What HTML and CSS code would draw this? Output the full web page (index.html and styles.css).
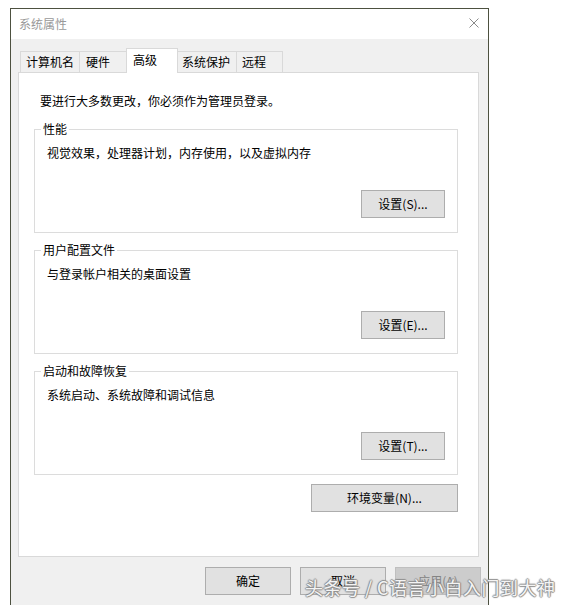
FILE: index.html
```html
<!DOCTYPE html>
<html lang="zh-CN">
<head>
<meta charset="utf-8">
<title>系统属性</title>
<link rel="stylesheet" href="styles.css">
</head>
<body>
<div class="window">
  <div class="titlebar">
    <span class="title">系统属性</span>
    <svg class="close" width="10" height="10" viewBox="0 0 10 10"><path d="M0.5 0.5 L9.5 9.5 M9.5 0.5 L0.5 9.5" stroke="#8a8a8a" stroke-width="1" fill="none"/></svg>
  </div>
  <div class="client">
    <div class="tabs">
      <div class="tab t1">计算机名</div>
      <div class="tab t2">硬件</div>
      <div class="tab selected">高级</div>
      <div class="tab t4">系统保护</div>
      <div class="tab t5">远程</div>
    </div>
    <div class="panel">
      <p class="notice">要进行大多数更改，你必须作为管理员登录。</p>
      <fieldset class="group">
        <legend>性能</legend>
        <div class="group-body">
          <p class="desc">视觉效果，处理器计划，内存使用，以及虚拟内存</p>
          <button class="btn">设置(S)...</button>
        </div>
      </fieldset>
      <fieldset class="group">
        <legend>用户配置文件</legend>
        <div class="group-body">
          <p class="desc">与登录帐户相关的桌面设置</p>
          <button class="btn">设置(E)...</button>
        </div>
      </fieldset>
      <fieldset class="group last">
        <legend>启动和故障恢复</legend>
        <div class="group-body">
          <p class="desc">系统启动、系统故障和调试信息</p>
          <button class="btn">设置(T)...</button>
        </div>
      </fieldset>
      <div class="env-row">
        <button class="btn env">环境变量(N)...</button>
      </div>
    </div>
    <div class="footer">
      <button class="btn foot">确定</button>
      <button class="btn foot">取消</button>
      <button class="btn foot disabled">应用(A)</button>
    </div>
  </div>
</div>
<div class="watermark">头条号 / C语言小白入门到大神</div>
</body>
</html>
```
FILE: styles.css
```css
html, body {
  margin: 0;
  padding: 0;
  overflow: hidden;
  background: #ffffff;
}
body {
  width: 569px;
  height: 605px;
  position: relative;
  font-family: "Noto Sans CJK SC", "Noto Sans", sans-serif;
  font-size: 12px;
  color: #000;
}
.window {
  margin: 8px 0 0 10px;
  width: 479px;
  height: 640px;
  box-sizing: border-box;
  border: 1px solid #4d5140;
  border-bottom: none;
  background: #f0f0f0;
}
.titlebar {
  height: 30px;
  background: #fff;
  display: flex;
  align-items: center;
  justify-content: space-between;
  padding: 0 9px 0 8px;
}
.title {
  color: #999;
  font-size: 12px;
  line-height: 30px;
}
.close {
  display: block;
  margin-top: -2px;
}
.client {
  padding: 9px 9px 0 7px;
}
.tabs {
  display: flex;
  align-items: flex-end;
  padding-left: 2px;
}
.tab {
  box-sizing: border-box;
  height: 21px;
  border: 1px solid #d9d9d9;
  border-bottom: none;
  background: #f0f0f0;
  display: flex;
  align-items: center;
  justify-content: flex-start;
  line-height: 16px;
  padding: 0 0 1px 5px;
  white-space: nowrap;
}
.t1 { width: 60px; }
.t2 { width: 49px; margin-left: -1px; padding-left: 6px; }
.selected {
  width: 52px;
  height: 25px;
  margin-left: -2px;
  margin-bottom: -1px;
  background: #fff;
  position: relative;
  z-index: 1;
  padding: 0 0 2px 6px;
}
.t4 { width: 60px; margin-left: -1px; padding-left: 4px; }
.t5 { width: 47px; margin-left: -1px; }
.panel {
  box-sizing: border-box;
  height: 485px;
  border: 1px solid #d9d9d9;
  background: #fff;
  padding: 20px 20px 0 15px;
}
.notice {
  margin: 0 0 12px 6px;
  line-height: 16px;
}
.group {
  margin: 0 0 9px 0;
  padding: 0;
  border: 1px solid #dcdcdc;
  min-width: 0;
}
.group + .group.last {
  margin-top: 1px;
}
.group legend {
  margin-left: 6px;
  padding: 0 2px;
  line-height: 16px;
}
.group-body {
  display: flex;
  flex-direction: column;
  align-items: flex-end;
  padding: 8px 12px 14px 12px;
}
.desc {
  align-self: stretch;
  margin: 0;
  line-height: 16px;
}
.btn {
  box-sizing: border-box;
  width: 84px;
  height: 28px;
  margin: 29px 0 0 0;
  padding: 0;
  border: 1px solid #adadad;
  background: #e1e1e1;
  font-family: "Noto Sans CJK SC", "Noto Sans", sans-serif;
  font-size: 12px;
  color: #000;
  line-height: 16px;
}
.env-row {
  display: flex;
  justify-content: flex-end;
  margin-top: 9px;
}
.btn.env {
  width: 147px;
  margin: 0;
}
.footer {
  display: flex;
  justify-content: flex-end;
  gap: 9px;
  padding: 10px 0 0 0;
  margin-right: -2px;
}
.btn.foot {
  width: 86px;
  margin: 0;
}
.btn.foot.disabled {
  background: #cccccc;
  border-color: #bfbfbf;
  color: #838383;
}
.watermark {
  position: absolute;
  left: 305px;
  top: 574px;
  font-size: 18px;
  line-height: 26px;
  letter-spacing: 0.5px;
  color: rgba(255, 255, 255, 0.92);
  white-space: nowrap;
  text-shadow: 1px 0 1px #8c8c8c, -1px 0 1px #8c8c8c, 0 1px 1px #8c8c8c, 0 -1px 1px #8c8c8c;
}
```
